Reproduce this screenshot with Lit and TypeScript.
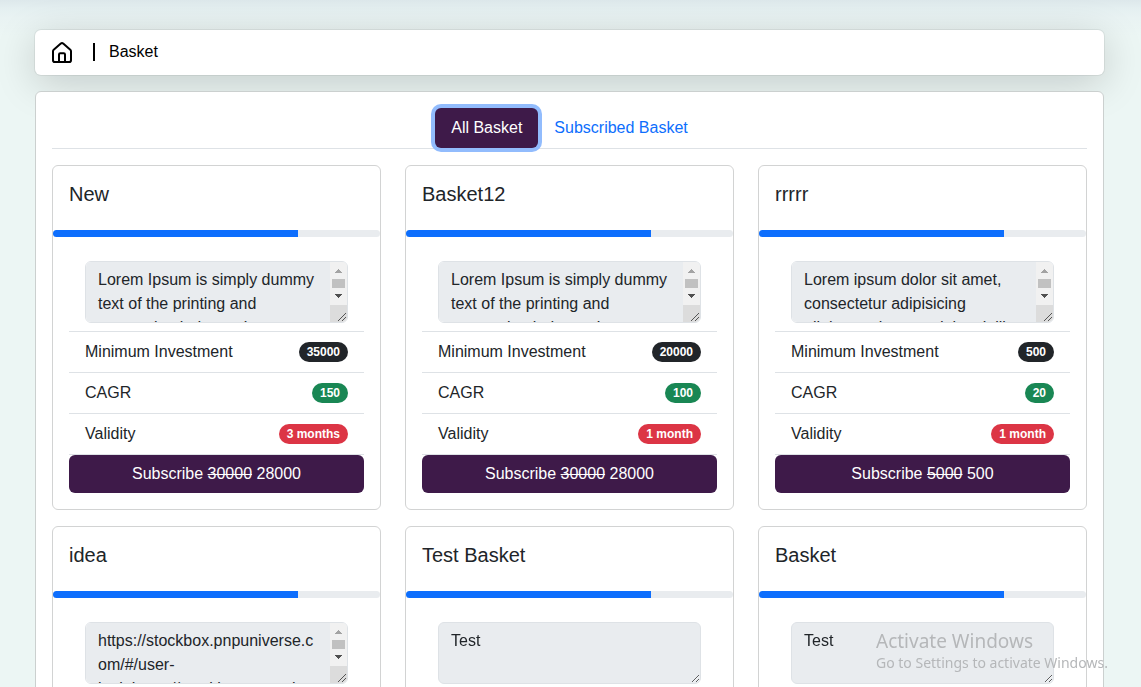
import { LitElement, html, css, nothing } from "lit";
import { customElement, property, state } from "lit/decorators.js";

interface Basket {
  title: string;
  description: string;
  investment: number;
  cagr: number;
  validity: string;
  fullPrice: number;
  price: number;
  progress: number;
}

const LOREM =
  "Lorem Ipsum is simply dummy text of the printing and typesetting industry. Lorem Ipsum has been the industry's standard.";

const BASKETS: Basket[] = [
  { title: "New", description: LOREM, investment: 35000, cagr: 150, validity: "3 months", fullPrice: 30000, price: 28000, progress: 75 },
  { title: "Basket12", description: LOREM, investment: 20000, cagr: 100, validity: "1 month", fullPrice: 30000, price: 28000, progress: 75 },
  { title: "rrrrr", description: "Lorem ipsum dolor sit amet, consectetur adipisicing elit.harum laceres dolor sit illo.", investment: 500, cagr: 20, validity: "1 month", fullPrice: 5000, price: 500, progress: 75 },
  { title: "idea", description: "https://stockbox.pnpuniverse.com/#/user-loginhttps://stockbox.pnpuniverse.com/#/user-login", investment: 500, cagr: 20, validity: "1 month", fullPrice: 5000, price: 500, progress: 75 },
  { title: "Test Basket", description: "Test", investment: 500, cagr: 20, validity: "1 month", fullPrice: 5000, price: 500, progress: 75 },
  { title: "Basket", description: "Test", investment: 500, cagr: 20, validity: "1 month", fullPrice: 5000, price: 500, progress: 75 },
];

@customElement("basket-card")
export class BasketCard extends LitElement {
  @property({ attribute: false }) basket!: Basket;

  static styles = css`
    :host {
      display: block;
      box-sizing: border-box;
      border: 1px solid #d2d3d3;
      border-radius: 6px;
      background: #fff;
      color: #212529;
      overflow: hidden;
    }
    .title {
      margin: 0;
      padding: 16px 16px 24px;
      font-size: 20px;
      line-height: 24px;
      font-weight: 400;
    }
    .track {
      height: 7px;
      border-radius: 4px;
      background: #e9ecef;
      overflow: hidden;
    }
    .fill {
      height: 100%;
      background: #0d6efd;
    }
    .body {
      padding: 16px;
    }
    .rows {
      list-style: none;
      margin: 0;
      padding: 0;
    }
    .row {
      display: flex;
      justify-content: space-between;
      align-items: center;
      padding: 8px 16px;
      border-bottom: 1px solid #dee2e6;
      line-height: 24px;
    }
    .field {
      position: relative;
      display: flex;
      flex: 1;
      min-width: 0;
    }
    .description {
      display: block;
      flex: 1;
      min-width: 0;
      box-sizing: border-box;
      height: 62px;
      padding: 6px 12px;
      border: 1px solid #dee2e6;
      border-radius: 6px;
      background: #e9ecef;
      color: #212529;
      font: inherit;
      line-height: 24px;
      resize: vertical;
      opacity: 1;
    }
    .description.long {
      padding-right: 29px;
      resize: none;
    }
    .scrollbar {
      position: absolute;
      top: 1px;
      right: 1px;
      border-radius: 0 5px 5px 0;
      pointer-events: none;
    }
    .badge {
      padding: 4px 8px;
      border-radius: 10px;
      color: #fff;
      font-size: 12px;
      line-height: 12px;
      font-weight: 700;
    }
    .dark { background: #212529; }
    .green { background: #198754; }
    .red { background: #dc3545; }
    .subscribe {
      display: block;
      width: 100%;
      padding: 7px 12px;
      border: 0;
      border-radius: 6px;
      background: #3e1a49;
      color: #fff;
      font: inherit;
      line-height: 24px;
      cursor: pointer;
    }
  `;

  private renderScrollbar() {
    return html`<svg class="scrollbar" width="17" height="60" viewBox="0 0 17 60" shape-rendering="crispEdges" aria-hidden="true">
      <rect width="17" height="43" fill="#f1f1f1" />
      <rect y="43" width="17" height="17" fill="#dcdcdc" />
      <rect x="2" y="17" width="13" height="9" fill="#c1c1c1" />
      <path d="M5 11 L8.5 7 L12 11 Z" fill="#a3a3a3" />
      <path d="M5 32 H12 L8.5 36 Z" fill="#505050" />
      <path d="M8 59 L16 51 M12 59 L16 55" stroke="#555" fill="none" shape-rendering="auto" />
    </svg>`;
  }

  render() {
    const b = this.basket;
    const long = b.description.length > 60;
    return html`
      <h5 class="title">${b.title}</h5>
      <div class="track"><div class="fill" style="width:${b.progress}%"></div></div>
      <div class="body">
        <ul class="rows">
          <li class="row">
            <div class="field">
              <textarea class="description ${long ? "long" : ""}" aria-label="Description" disabled .value=${b.description}></textarea>
              ${long ? this.renderScrollbar() : nothing}
            </div>
          </li>
          <li class="row"><span>Minimum Investment</span><span class="badge dark">${b.investment}</span></li>
          <li class="row"><span>CAGR</span><span class="badge green">${b.cagr}</span></li>
          <li class="row"><span>Validity</span><span class="badge red">${b.validity}</span></li>
        </ul>
        <button class="subscribe" type="button">Subscribe <del>${b.fullPrice}</del> ${b.price}</button>
      </div>
    `;
  }
}

@customElement("app-root")
export class AppRoot extends LitElement {
  @state() private tab = 0;

  static styles = css`
    :host {
      display: block;
      box-sizing: border-box;
      height: 100vh;
      overflow: hidden;
      padding: 30px 37px 0 35px;
      background: linear-gradient(#dde8eb, #e5f0f1 9px, #e9f3f3 18px, #ecf6f4 36px, #ecf6f4);
      font: 16px/24px "Liberation Sans", Arial, sans-serif;
      color: #000;
    }
    .crumbs {
      display: flex;
      align-items: center;
      padding: 10px 17px 11px;
      margin-bottom: 16px;
      border-radius: 6px;
      background: #fff;
      box-shadow: 0 0 0 1px rgba(0, 0, 0, 0.06), 0 8px 40px rgba(0, 0, 0, 0.18);
    }
    .home {
      display: flex;
      color: #000;
    }
    .divider {
      width: 2px;
      height: 18px;
      margin: 0 14px 0 21px;
      background: #000;
    }
    .panel {
      position: relative;
      padding: 16px;
      border: 1px solid #cbd0cf;
      border-radius: 6px;
      background: #fff;
    }
    .tabs {
      display: flex;
      justify-content: center;
      margin-bottom: 16px;
      border-bottom: 1px solid #dee2e6;
    }
    .tab {
      padding: 8px 16px;
      border: 0;
      border-radius: 6px;
      background: none;
      color: #0d6efd;
      font: inherit;
      cursor: pointer;
    }
    .tab.active {
      background: #3e1a49;
      color: #fff;
      box-shadow: 0 0 0 4px #92bcfd;
    }
    .grid {
      display: grid;
      grid-template-columns: repeat(3, minmax(0, 1fr));
      gap: 16px 24px;
    }
    .watermark {
      position: fixed;
      right: 29px;
      bottom: 14px;
      width: 236px;
      white-space: nowrap;
      font-family: "Noto Sans", "Open Sans", sans-serif;
      color: #b5b7b9;
      pointer-events: none;
    }
    .watermark-title {
      font-size: 19px;
      line-height: 24px;
    }
    .watermark-note {
      font-size: 14px;
      line-height: 20px;
    }
  `;

  render() {
    return html`
      <nav class="crumbs" aria-label="Breadcrumb">
        <a class="home" href="#" aria-label="Home">
          <svg width="20" height="21" viewBox="0 0 20 21" fill="none" stroke="currentColor" stroke-width="2" stroke-linecap="round" stroke-linejoin="round">
            <path d="M1 9.2 Q1 8.4 1.7 7.8 L8.8 1.6 Q10 0.6 11.2 1.6 L18.3 7.8 Q19 8.4 19 9.2 V18.2 Q19 20 17.2 20 H2.8 Q1 20 1 18.2 Z" />
            <path d="M7 20 V12.5 Q7 11.3 8.2 11.3 H11.8 Q13 11.3 13 12.5 V20" />
          </svg>
        </a>
        <span class="divider"></span>
        <span>Basket</span>
      </nav>
      <main class="panel">
        <div class="tabs" role="tablist">
          ${["All Basket", "Subscribed Basket"].map(
            (label, i) => html`<button
              class="tab ${this.tab === i ? "active" : ""}"
              type="button"
              role="tab"
              aria-selected=${this.tab === i ? "true" : "false"}
              @click=${() => (this.tab = i)}
            >${label}</button>`
          )}
        </div>
        <div class="grid">
          ${BASKETS.map((b) => html`<basket-card .basket=${b}></basket-card>`)}
        </div>
      </main>
      <div class="watermark">
        <div class="watermark-title">Activate Windows</div>
        <div class="watermark-note">Go to Settings to activate Windows.</div>
      </div>
    `;
  }
}
